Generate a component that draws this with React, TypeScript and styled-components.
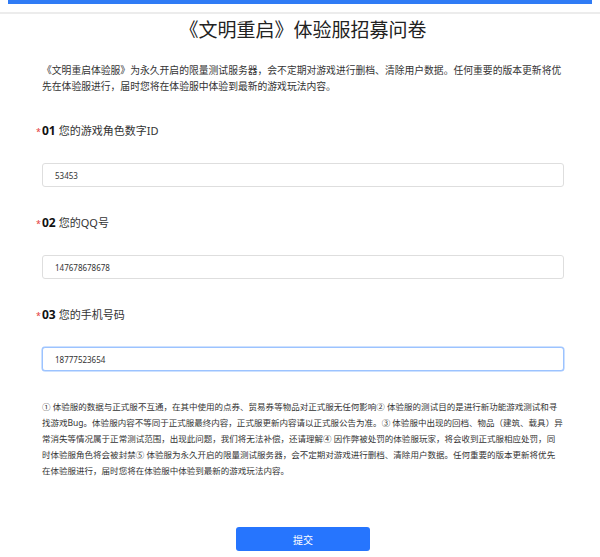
import React from "react";
import styled, {createGlobalStyle} from "styled-components";

const GlobalStyle = createGlobalStyle`
    body {
        margin: 0;
        background: #fff;
        font-family: "Noto Sans", "Noto Sans CJK SC", sans-serif;
        color: #333;
    }
`;

const TopBar = styled.div`
    height: 4px;
    margin: 0 8px;
    background: #2f7bf5;
`;

const Divider = styled.div`
    height: 2px;
    margin-top: 8px;
    background: #ececec;
`;

const Main = styled.main`
    padding: 0 36px 0 42px;
`;

const Title = styled.h1`
    margin: 4px 0 0;
    font-size: 19px;
    line-height: 24px;
    font-weight: 400;
    text-align: center;
    color: #222;
`;

const Intro = styled.p`
    margin: 21px 0 0;
    font-size: 9.8px;
    line-height: 16px;
    color: #333;
`;

const Field = styled.div`
    margin-top: 28px;
`;

const Label = styled.label`
    display: flex;
    align-items: baseline;
    margin-left: -6px;
    line-height: 16px;
    font-size: 11px;
    color: #333;
`;

const Star = styled.span`
    width: 6px;
    color: #e4393c;
    font-size: 9px;
`;

const Num = styled.span`
    font-weight: 700;
    font-size: 12px;
    color: #111;
    margin-right: 3px;
`;

const Input = styled.input<{$active?: boolean}>`
    display: block;
    box-sizing: border-box;
    width: 100%;
    height: 24px;
    margin-top: 23px;
    padding: 0 12px;
    border: 1px solid ${(p) => (p.$active ? "#9cc3ff" : "#dedede")};
    box-shadow: ${(p) => (p.$active ? "0 0 0 0.5px #9cc3ff" : "none")};
    border-radius: 3px;
    font-family: "Noto Sans", sans-serif;
    font-size: 8px;
    color: #333;
    outline: none;
    background: #fff;
`;

const Notice = styled.p`
    margin: 28px 0 0;
    font-size: 8.52px;
    line-height: 16px;
    color: #333;
`;

const Actions = styled.div`
    display: flex;
    justify-content: center;
    margin-top: 48px;
`;

const Submit = styled.button`
    width: 134px;
    height: 24px;
    border: none;
    border-radius: 3px;
    background: #2675fe;
    color: #fff;
    font-family: "Noto Sans CJK SC", sans-serif;
    font-size: 10px;
    cursor: pointer;
`;

const questions = [
    {num: "01", label: "您的游戏角色数字ID", value: "53453"},
    {num: "02", label: "您的QQ号", value: "147678678678"},
    {num: "03", label: "您的手机号码", value: "18777523654", active: true},
];

// broken where the original page wraps
const notice = [
    "① 体验服的数据与正式服不互通，在其中使用的点券、贸易券等物品对正式服无任何影响② 体验服的测试目的是进行新功能游戏测试和寻找游戏Bug。体验服内容不等同于正式服最终内容，正式服更新内容请以正式服公告为准。③ 体验服中出现的回档、物品（建筑、载具）异常消失等情况属于正常测试范围，出现此问题，我们将无法补偿，还请理解④ 因作弊被处罚的体验服玩家，将会收到正式服相应处罚，同",
    "时体验服角色将会被封禁⑤ 体验服为永久开启的限量测试服务器，会不定期对游戏进行删档、清除用户数据。任何重要的版本更新将优先",
    "在体验服进行，届时您将在体验服中体验到最新的游戏玩法内容。",
];

function App() {
    return (
        <>
            <GlobalStyle/>
            <TopBar/>
            <Divider/>
            <Main>
                <Title>《文明重启》体验服招募问卷</Title>
                <Intro>
                    《文明重启体验服》为永久开启的限量测试服务器，会不定期对游戏进行删档、清除用户数据。任何重要的版本更新将优先在体验服进行，届时您将在体验服中体验到最新的游戏玩法内容。
                </Intro>
                {questions.map((q) => (
                    <Field key={q.num}>
                        <Label>
                            <Star>*</Star>
                            <Num>{q.num}</Num>
                            {q.label}
                        </Label>
                        <Input defaultValue={q.value} $active={q.active} autoFocus={q.active}/>
                    </Field>
                ))}
                <Notice>
                    {notice.map((line, i) => (
                        <React.Fragment key={i}>
                            {i > 0 && <br/>}
                            {line}
                        </React.Fragment>
                    ))}
                </Notice>
                <Actions>
                    <Submit>提交</Submit>
                </Actions>
            </Main>
        </>
    );
}

export default App;
